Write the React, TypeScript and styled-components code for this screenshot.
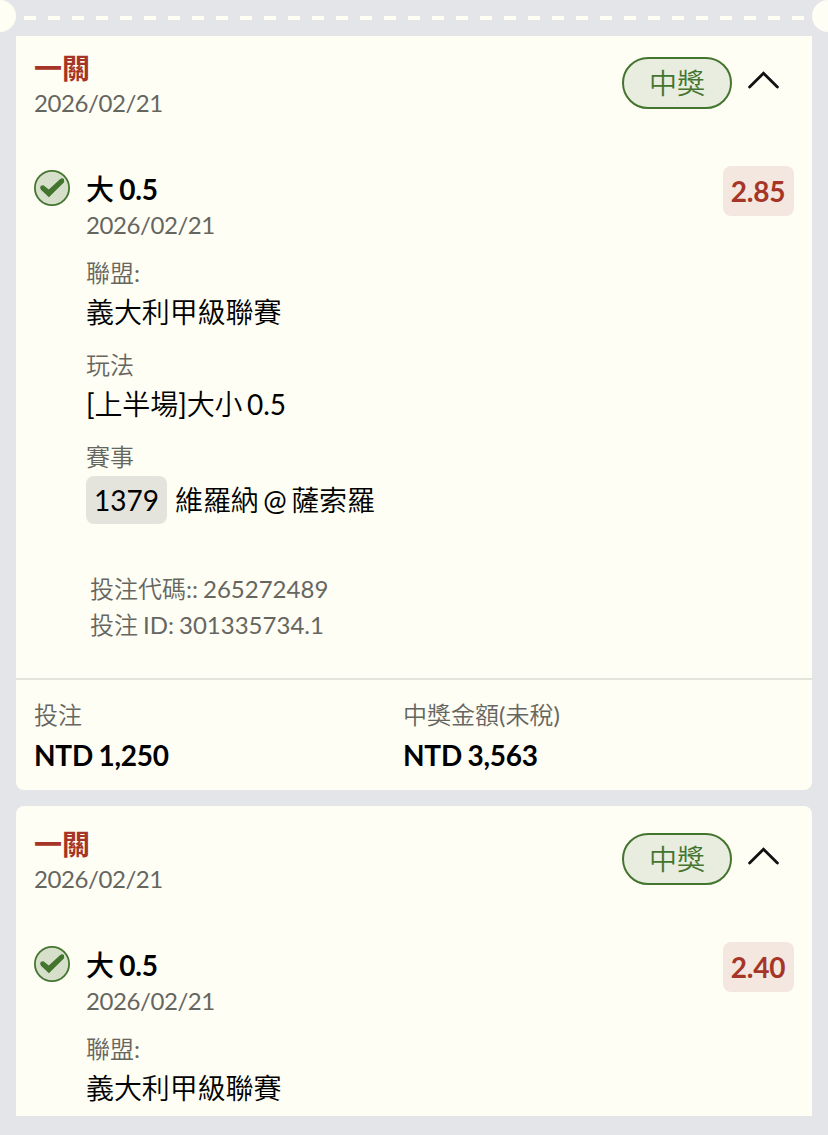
import React from 'react';
import styled, { createGlobalStyle } from 'styled-components';

const GlobalStyle = createGlobalStyle`
  *, *::before, *::after { box-sizing: border-box; }
  body {
    margin: 0;
    background: #e4e5e8;
    color: #000;
    font-family: Lato, "Noto Sans CJK TC", sans-serif;
    word-spacing: -0.07em;
  }
`;

const Page = styled.main`
  display: flex;
  flex-direction: column;
  height: 1135px;
  overflow: hidden;
`;

const Perforation = styled.div`
  display: flex;
  align-items: flex-start;
  justify-content: space-between;
  height: 36px;
  flex: none;
`;

const Notch = styled.div<{ $side: 'left' | 'right' }>`
  width: 16px;
  height: 32px;
  background: #fefef4;
  border-radius: ${({ $side }) => ($side === 'left' ? '0 16px 16px 0' : '16px 0 0 16px')};
`;

const Dashes = styled.div`
  flex: 1;
  height: 4px;
  margin: 16px 8px 0;
  background: repeating-linear-gradient(90deg, #fefef4 0 12px, transparent 12px 24px);
`;

const Card = styled.section<{ $joined?: boolean; $cut?: boolean }>`
  flex: none;
  margin: 0 16px 16px;
  padding-top: ${({ $joined }) => ($joined ? 14 : 20)}px;
  background: #fefef4;
  border-radius: ${({ $joined, $cut }) => `${$joined ? '0 0' : '8px 8px'} ${$cut ? '0 0' : '8px 8px'}`};
  height: ${({ $cut }) => ($cut ? '310px' : 'auto')};
  overflow: hidden;
`;

const CardHeader = styled.header`
  display: flex;
  justify-content: space-between;
  padding: 0 32px 0 18px;
`;

const Title = styled.h2`
  margin: 0;
  font-size: 28px;
  line-height: 36px;
  font-weight: 700;
  color: #a53526;
`;

const DateText = styled.div`
  padding-bottom: 2px;
  font-size: 24px;
  line-height: 34px;
  letter-spacing: -0.42px;
  color: #666661;
`;

const Status = styled.div`
  display: flex;
  align-items: flex-start;
  gap: 15px;
  padding-top: 7px;
`;

const Pill = styled.span`
  display: flex;
  align-items: center;
  justify-content: center;
  width: 110px;
  height: 52px;
  border: 2px solid #44752f;
  border-radius: 26px;
  background: #e9ede0;
  color: #44752f;
  font-size: 28px;
  line-height: 48px;
`;

const Chevron = styled.svg`
  width: 33px;
  height: 22px;
  margin-top: 12px;
`;

const Selection = styled.div`
  display: flex;
  align-items: flex-start;
  padding: 50px 18px 0;
`;

const CheckIcon = styled.svg`
  width: 36px;
  height: 36px;
  margin: -2px 16px 0 0;
  flex: none;
`;

const Details = styled.div`
  flex: 1;
`;

const Pick = styled.h3`
  margin: 0;
  padding-bottom: 2px;
  font-size: 28px;
  line-height: 34px;
  font-weight: 700;
  letter-spacing: -0.2px;
`;

const Odds = styled.span`
  width: 71px;
  height: 50px;
  margin-top: -6px;
  border-radius: 8px;
  background: #f4e7e0;
  color: #a53526;
  font-size: 28px;
  line-height: 50px;
  letter-spacing: -0.2px;
  padding-right: 1px;
  font-weight: 700;
  text-align: center;
`;

const Field = styled.div<{ $first?: boolean }>`
  margin-top: ${({ $first }) => ($first ? 12 : 16)}px;
`;

const Label = styled.div`
  padding-bottom: 2px;
  font-size: 24px;
  line-height: 34px;
  color: #666661;
`;

const Value = styled.div`
  font-size: 28px;
  line-height: 40px;
  letter-spacing: -0.1px;
  word-spacing: -0.09em;
`;

const Match = styled.div`
  display: flex;
  align-items: center;
  gap: 8px;
  font-size: 28px;
  line-height: 48px;
  letter-spacing: -0.1px;
  word-spacing: -0.09em;
`;

const MatchCode = styled.span`
  width: 81px;
  text-align: center;
  letter-spacing: 0;
  border-radius: 8px;
  background: #e4e4dc;
`;

const Codes = styled.div`
  margin: 48px 0 34px 4px;
`;

const Totals = styled.footer`
  display: grid;
  grid-template-columns: 369px 1fr;
  padding: 18px 18px 12px;
  border-top: 2px solid #e3e4dc;
`;

const Amount = styled.div`
  padding-bottom: 2px;
  font-size: 28px;
  line-height: 42px;
  letter-spacing: -0.22px;
  font-weight: 700;
`;

const Han = styled.span<{ $weight: number }>`
  font-weight: ${({ $weight }) => $weight};
`;

/* Sets Chinese runs in their own weight, next to Lato for digits and Latin. */
function Text({ children, weight = 350 }: { children: string; weight?: number }) {
  return (
    <span>
      {children.split(/([\u4e00-\u9fff]+)/).map((run, index) =>
        index % 2 ? (
          <Han key={index} $weight={weight}>
            {run}
          </Han>
        ) : (
          run
        ),
      )}
    </span>
  );
}

interface Bet {
  odds: string;
  match?: { code: string; teams: string };
  play?: string;
  betCode?: string;
  betId?: string;
  stake?: string;
  payout?: string;
}

const bets: Bet[] = [
  {
    odds: '2.85',
    play: '[上半場]大小 0.5',
    match: { code: '1379', teams: '維羅納 @ 薩索羅' },
    betCode: '265272489',
    betId: '301335734.1',
    stake: 'NTD 1,250',
    payout: 'NTD 3,563',
  },
  { odds: '2.40' },
];

function BetCard({ bet, joined }: { bet: Bet; joined: boolean }) {
  return (
    <Card $joined={joined} $cut={!bet.stake}>
      <CardHeader>
        <div>
          <Title>一關</Title>
          <DateText>2026/02/21</DateText>
        </div>
        <Status>
          <Pill>
            <Text>中獎</Text>
          </Pill>
          <Chevron viewBox="0 0 33 22" fill="none" stroke="#111" strokeWidth="2.8" strokeLinecap="round">
            <path d="M2.6 18 16.5 4.2 30.4 18" />
          </Chevron>
        </Status>
      </CardHeader>
      <Selection>
        <CheckIcon viewBox="0 0 36 36">
          <circle cx="18" cy="18" r="17.1" fill="#d5dfca" stroke="#44752f" strokeWidth="1.8" />
          <path
            d="M6.2 17.6Q6.4 15.2 9.4 15.3L14.8 19.6 26.2 8.9Q28.6 7.4 30 9.2L30.1 12.3 14.9 27.2 7.2 20Q6.1 18.8 6.2 17.6Z"
            fill="#44752f"
          />
        </CheckIcon>
        <Details>
          <Pick>
            <Text weight={500}>大 0.5</Text>
          </Pick>
          <DateText>2026/02/21</DateText>
          <Field $first>
            <Label>
              <Text>聯盟:</Text>
            </Label>
            <Value>
              <Text>義大利甲級聯賽</Text>
            </Value>
          </Field>
          {bet.play && (
            <Field>
              <Label>
                <Text>玩法</Text>
              </Label>
              <Value>
                <Text>{bet.play}</Text>
              </Value>
            </Field>
          )}
          {bet.match && (
            <Field>
              <Label>
                <Text>賽事</Text>
              </Label>
              <Match>
                <MatchCode>{bet.match.code}</MatchCode>
                <Text>{bet.match.teams}</Text>
              </Match>
            </Field>
          )}
          {bet.betCode && (
            <Codes>
              <Label>
                <Text>{`投注代碼:: ${bet.betCode}`}</Text>
              </Label>
              <Label>
                <Text>{`投注 ID: ${bet.betId}`}</Text>
              </Label>
            </Codes>
          )}
        </Details>
        <Odds>{bet.odds}</Odds>
      </Selection>
      {bet.stake && (
        <Totals>
          <div>
            <Label>
              <Text>投注</Text>
            </Label>
            <Amount>{bet.stake}</Amount>
          </div>
          <div>
            <Label>
              <Text>中獎金額(未稅)</Text>
            </Label>
            <Amount>{bet.payout}</Amount>
          </div>
        </Totals>
      )}
    </Card>
  );
}

export default function App() {
  return (
    <Page>
      <GlobalStyle />
      <Perforation>
        <Notch $side="left" />
        <Dashes />
        <Notch $side="right" />
      </Perforation>
      {bets.map((bet, index) => (
        <BetCard key={bet.odds} bet={bet} joined={index === 0} />
      ))}
    </Page>
  );
}
